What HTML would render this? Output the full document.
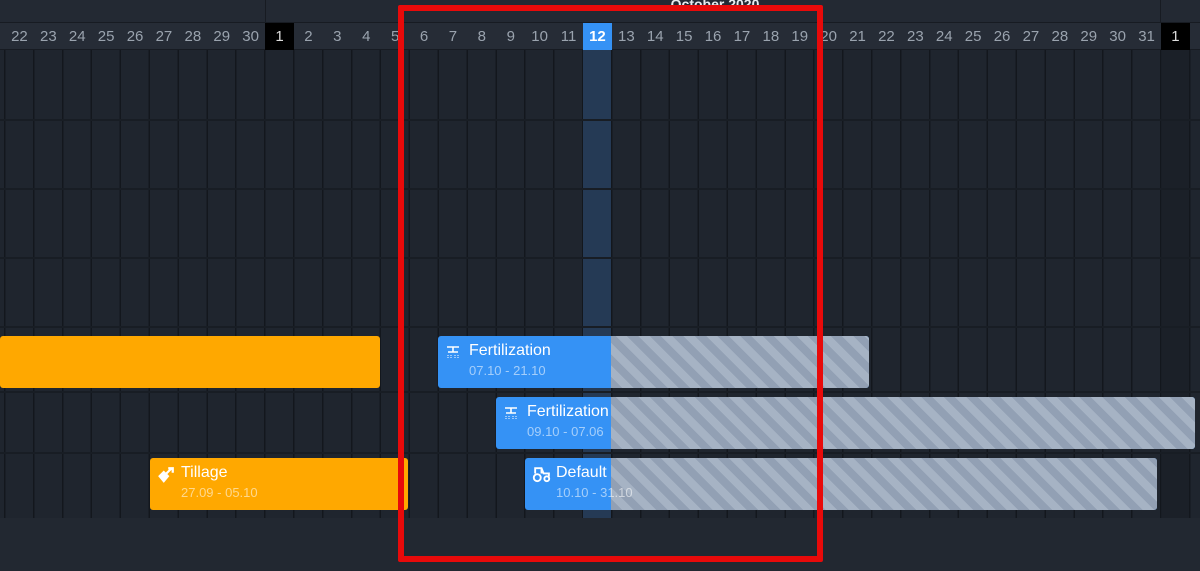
<!DOCTYPE html>
<html><head><meta charset="utf-8"><style>
*{margin:0;padding:0;box-sizing:border-box}
body{width:1200px;height:571px;overflow:hidden;background:#222831;font-family:"Liberation Sans",sans-serif;position:relative}
.grid{position:absolute;left:0;top:50px;width:1200px;height:468px;background-color:#1f252e;
background-image:repeating-linear-gradient(90deg,transparent 0 4px,#13171d 4px 5.5px,transparent 5.5px 28.9px);}
.h{position:absolute;left:0;width:1200px;height:2px;background:#181d24}
.month{position:absolute;top:0;left:0;width:1200px;height:23px;background:#232933;border-bottom:1px solid #171b22}
.days{position:absolute;top:23px;left:0;width:1200px;height:27px;background:#262c36;border-bottom:1px solid #171b22}
.d{position:absolute;top:0;width:28.9px;height:27px;line-height:27px;text-align:center;color:#9aa3ae;font-size:15px}
.bar{position:absolute;height:52px;border-radius:3px;color:#fff;overflow:hidden}
.t{position:absolute;left:31px;top:6px;font-size:16px}
.s{position:absolute;left:31px;top:27px;font-size:13px;color:rgba(255,255,255,.55)}
.hatch{position:absolute;top:0;bottom:0;right:0;background:repeating-linear-gradient(45deg,#92a0b4 0 8px,#a6b3c4 8px 16px)}
.ic{position:absolute;left:7px;top:8px}
</style></head><body>
<div class="month"><div style="position:absolute;left:265px;top:0;width:1px;height:23px;background:#171b22"></div><div style="position:absolute;left:1160px;top:0;width:1px;height:23px;background:#171b22"></div>
<div style="position:absolute;left:640px;top:-4px;width:150px;text-align:center;color:#e8ecf0;font-size:14px;font-weight:bold">October 2020</div></div>
<div class="days">
<div class="d" style="left:5px">22</div><div class="d" style="left:33.9px">23</div><div class="d" style="left:62.8px">24</div><div class="d" style="left:91.7px">25</div><div class="d" style="left:120.6px">26</div><div class="d" style="left:149.5px">27</div><div class="d" style="left:178.4px">28</div><div class="d" style="left:207.3px">29</div><div class="d" style="left:236.2px">30</div><div class="d" style="left:265.1px;background:#000;color:#ddd">1</div><div class="d" style="left:294px">2</div><div class="d" style="left:322.9px">3</div><div class="d" style="left:351.8px">4</div><div class="d" style="left:380.7px">5</div><div class="d" style="left:409.6px">6</div><div class="d" style="left:438.5px">7</div><div class="d" style="left:467.4px">8</div><div class="d" style="left:496.3px">9</div><div class="d" style="left:525.2px">10</div><div class="d" style="left:554.1px">11</div><div class="d" style="left:583px;background:#3592f5;color:#fff;font-weight:bold">12</div><div class="d" style="left:611.9px">13</div><div class="d" style="left:640.8px">14</div><div class="d" style="left:669.7px">15</div><div class="d" style="left:698.6px">16</div><div class="d" style="left:727.5px">17</div><div class="d" style="left:756.4px">18</div><div class="d" style="left:785.3px">19</div><div class="d" style="left:814.2px">20</div><div class="d" style="left:843.1px">21</div><div class="d" style="left:872px">22</div><div class="d" style="left:900.9px">23</div><div class="d" style="left:929.8px">24</div><div class="d" style="left:958.7px">25</div><div class="d" style="left:987.6px">26</div><div class="d" style="left:1016.5px">27</div><div class="d" style="left:1045.4px">28</div><div class="d" style="left:1074.3px">29</div><div class="d" style="left:1103.2px">30</div><div class="d" style="left:1132.1px">31</div><div class="d" style="left:1161px;background:#000;color:#ddd">1</div>
</div>
<div class="grid"></div>
<div style="position:absolute;left:1162px;top:50px;width:27px;height:468px;background:#1b2028"></div>
<div style="position:absolute;left:583px;top:50px;width:28px;height:468px;background:#253a55"></div>
<div class="h" style="top:119px"></div><div class="h" style="top:188px"></div><div class="h" style="top:257px"></div><div class="h" style="top:326px"></div><div class="h" style="top:391px"></div><div class="h" style="top:452px"></div>

<div class="bar" style="left:0;top:336px;width:380px;background:#ffa800"></div>

<div class="bar" style="left:438px;top:336px;width:431px;background:#3592f5">
<div class="hatch" style="left:173px"></div>
<svg class="ic" width="16" height="16" viewBox="0 0 16 16" fill="none" stroke="#fff" stroke-width="1.6"><path d="M2 3h12M8 3v5M3 8h10"/><path d="M3 11v3M6 11v3M10 11v3M13 11v3" stroke-width="1" stroke-dasharray="1 1"/></svg>
<div class="t">Fertilization</div><div class="s">07.10 - 21.10</div></div>

<div class="bar" style="left:496px;top:397px;width:699px;background:#3592f5">
<div class="hatch" style="left:115px"></div>
<svg class="ic" width="16" height="16" viewBox="0 0 16 16" fill="none" stroke="#fff" stroke-width="1.6"><path d="M2 3h12M8 3v5M3 8h10"/><path d="M3 11v3M6 11v3M10 11v3M13 11v3" stroke-width="1" stroke-dasharray="1 1"/></svg>
<div class="t">Fertilization</div><div class="s">09.10 - 07.06</div></div>

<div class="bar" style="left:150px;top:458px;width:258px;background:#ffa800">
<svg class="ic" width="18" height="18" viewBox="0 0 16 16"><path d="M1 9l5-5 5 5-5 6z" fill="#fff"/><path d="M7 8l6-6M10 2h4v4" stroke="#fff" stroke-width="2" fill="none"/></svg>
<div class="t">Tillage</div><div class="s">27.09 - 05.10</div></div>

<div class="bar" style="left:525px;top:458px;width:632px;background:#3592f5">
<div class="hatch" style="left:86px"></div>
<svg class="ic" width="19" height="17" viewBox="0 0 18 16" fill="none" stroke="#fff" stroke-width="1.8"><circle cx="5" cy="11" r="3.3"/><circle cx="14" cy="12" r="2.3"/><path d="M3 7V2h6l2 5h5v3M9 2v5"/></svg>
<div class="t">Default</div><div class="s">10.10 - 31.10</div></div>

<div style="position:absolute;left:398px;top:5px;width:425px;height:557px;border:6px solid #e80a0a;border-radius:2px"></div>
</body></html>
